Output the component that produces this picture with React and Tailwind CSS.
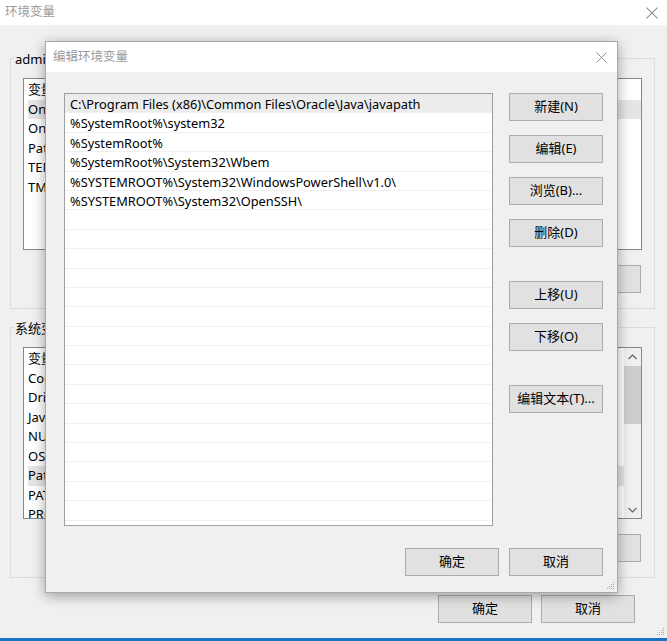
import React from 'react';

const paths = [
  'C:\\Program Files (x86)\\Common Files\\Oracle\\Java\\javapath',
  '%SystemRoot%\\system32',
  '%SystemRoot%',
  '%SystemRoot%\\System32\\Wbem',
  '%SYSTEMROOT%\\System32\\WindowsPowerShell\\v1.0\\',
  '%SYSTEMROOT%\\System32\\OpenSSH\\',
];

const userVars = ['OneDrive', 'OneDriveConsumer', 'Path', 'TEMP', 'TMP'];
const sysVars = ['ComSpec', 'DriverData', 'JavaHome', 'NUMBER_OF_PROCESSORS', 'OS', 'Path', 'PATHEXT', 'PROCESSOR_ARCHITECTURE'];

function CloseX({ size = 11 }) {
  return (
    <svg width={size} height={size} viewBox="0 0 11 11" className="block">
      <path d="M0.5 0.5L10.5 10.5M10.5 0.5L0.5 10.5" stroke="#8c8c8c" strokeWidth="1" />
    </svg>
  );
}

function Grip() {
  return (
    <svg width="8" height="8" viewBox="0 0 8 8" className="block">
      <g fill="#a8a8a8">
        <rect x="6" y="0" width="1" height="1" />
        <rect x="4" y="2" width="1" height="1" />
        <rect x="6" y="2" width="1" height="1" />
        <rect x="2" y="4" width="1" height="1" />
        <rect x="4" y="4" width="1" height="1" />
        <rect x="6" y="4" width="1" height="1" />
        <rect x="0" y="6" width="1" height="1" />
        <rect x="2" y="6" width="1" height="1" />
        <rect x="4" y="6" width="1" height="1" />
        <rect x="6" y="6" width="1" height="1" />
      </g>
    </svg>
  );
}

function Btn({ children, className = '' }) {
  return (
    <div
      className={`h-[28px] w-[94px] shrink-0 border border-[#adadad] bg-[#e1e1e1] flex items-center justify-center text-[13px] text-black ${className}`}
    >
      {children}
    </div>
  );
}

function VarList({ items, selected, scroll }) {
  return (
    <div className="relative h-[172px] border border-[#828790] bg-white overflow-hidden flex">
      <div className="flex-1 pl-[4px] pt-[1px] whitespace-nowrap">
        <div className="h-[19.5px] leading-[19.5px]">变量</div>
        {items.map((v, i) => (
          <div
            key={i}
            className={`h-[19.5px] leading-[19.5px] ${i === selected ? 'bg-[#e5e5e5]' : ''}`}
          >
            {v}
          </div>
        ))}
      </div>
      {scroll && (
        <div className="w-[17px] bg-[#f0f0f0] flex flex-col items-center">
          <div className="h-[17px] flex items-center justify-center">
            <svg width="9" height="6" viewBox="0 0 9 6"><path d="M0.5 5L4.5 1L8.5 5" stroke="#606060" strokeWidth="1.2" fill="none" /></svg>
          </div>
          <div className="w-[17px] h-[58px] mt-[1px] bg-[#cdcdcd]" />
          <div className="flex-1" />
          <div className="h-[17px] flex items-center justify-center">
            <svg width="9" height="6" viewBox="0 0 9 6"><path d="M0.5 1L4.5 5L8.5 1" stroke="#606060" strokeWidth="1.2" fill="none" /></svg>
          </div>
        </div>
      )}
    </div>
  );
}

function Group({ label, items, selected, scroll, className = '' }) {
  return (
    <div className={`h-[251px] border border-[#dcdcdc] px-[12px] ${className}`}>
      <div className="-mt-[9px] -ml-[9px] h-[18px] leading-[18px] w-fit px-[1px] bg-[#f0f0f0] text-[13px] whitespace-nowrap">
        {label}
      </div>
      <div className="mt-[10px]">
        <VarList items={items} selected={selected} scroll={scroll} />
      </div>
      <div className="mt-[15px] flex justify-end gap-[9px] pr-[1px]">
        <Btn className="h-[27px]">新建(W)...</Btn>
        <Btn className="h-[27px]">编辑(I)...</Btn>
        <Btn className="h-[27px]">删除(L)</Btn>
      </div>
    </div>
  );
}

export default function App() {
  const rows = Array.from({ length: 23 }, (_, i) => paths[i] || '');

  return (
    <div
      className="relative w-[667px] h-[641px] overflow-hidden bg-[#f0f0f0] text-[13px] text-black flex flex-col"
      style={{ fontFamily: '"Noto Sans", "Noto Sans CJK SC", sans-serif' }}
    >
      {/* background window: 环境变量 */}
      <div className="h-[25px] bg-white flex items-center justify-between pl-[5px] pr-[9px] shrink-0">
        <span className="text-[12.5px] text-[#9a9a9a]">环境变量</span>
        <CloseX size={12} />
      </div>

      <div className="pt-[33px] pl-[10px] pr-[12px]">
        <Group label="administrator 的用户变量(U)" items={userVars} selected={0} />
        <Group label="系统变量(S)" items={sysVars} selected={5} scroll className="mt-[18px]" />
      </div>

      <div className="mt-[17px] flex justify-end gap-[9px] pr-[32px]">
        <Btn>确定</Btn>
        <Btn>取消</Btn>
      </div>

      <div className="flex-1 flex justify-end items-end pr-[2px] pb-[2px]">
        <Grip />
      </div>
      <div className="h-[3px] bg-[#1a73c4] shrink-0" />

      {/* foreground dialog: 编辑环境变量 */}
      <div className="absolute left-[45px] top-[41px] w-[573px] h-[552px] border border-[#a9a9a9] bg-[#f0f0f0] shadow-[0_3px_12px_rgba(0,0,0,0.35)] flex flex-col">
        <div className="h-[30px] bg-white flex items-center justify-between pl-[7px] pr-[10px] shrink-0">
          <span className="text-[12.5px] text-[#9a9a9a]">编辑环境变量</span>
          <CloseX />
        </div>

        <div className="flex-1 flex flex-col pl-[18px] pr-[14px] pt-[21px]">
          <div className="flex gap-[16px]">
            <div className="w-[429px] h-[433px] border border-[#a0a0a0] bg-white overflow-hidden">
              {rows.map((p, i) => (
                <div
                  key={i}
                  className={`h-[19.4px] leading-[20px] pl-[5px] border-b border-[#f0f0f0] whitespace-nowrap text-[12.8px] ${i === 0 ? 'bg-[#ececec]' : ''}`}
                >
                  {p}
                </div>
              ))}
            </div>

            <div className="flex flex-col">
              <Btn>新建(N)</Btn>
              <Btn className="mt-[14px]">编辑(E)</Btn>
              <Btn className="mt-[14px]">浏览(B)...</Btn>
              <Btn className="mt-[14px]">删除(D)</Btn>
              <Btn className="mt-[34px]">上移(U)</Btn>
              <Btn className="mt-[14px]">下移(O)</Btn>
              <Btn className="mt-[34px]">编辑文本(T)...</Btn>
            </div>
          </div>

          <div className="mt-[22px] flex justify-end gap-[10px]">
            <Btn>确定</Btn>
            <Btn>取消</Btn>
          </div>

          <div className="flex-1 flex justify-end items-end -mr-[12px] pb-[2px]">
            <Grip />
          </div>
        </div>
      </div>
    </div>
  );
}
